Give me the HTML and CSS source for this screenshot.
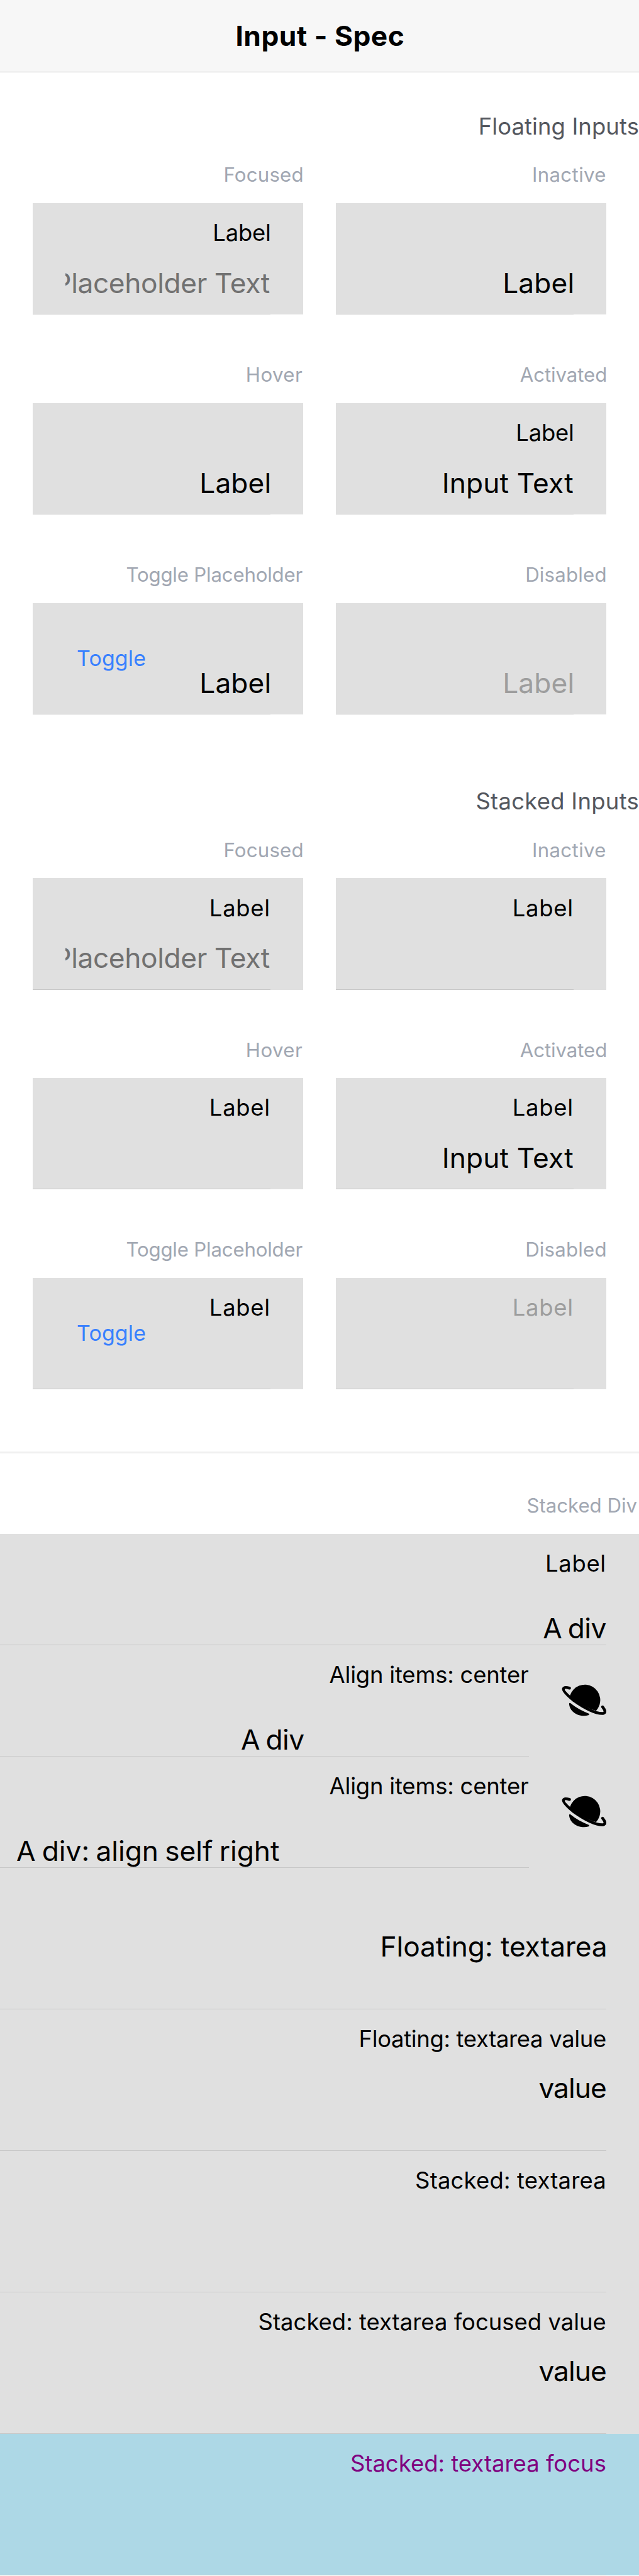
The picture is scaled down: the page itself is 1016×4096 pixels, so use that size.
FILE: index.html
```html
<!DOCTYPE html>
<html lang="en">
<head>
<meta charset="utf-8">
<title>Input - Spec</title>
<link rel="stylesheet" href="styles.css">
</head>
<body>
<svg class="defs" aria-hidden="true">
  <symbol id="planet" viewBox="78 27 252 252">
    <path d="M131 130A85 85 0 1 1 274 214C232 204 175 171 131 138Z"/>
    <path d="M133 172C164 197 200 217 234 230Q241 235 232 239C183 252 129 223 126 176Q127 169 133 172Z"/>
    <path d="M128 90C112 85 98 84 95 93C91 105 115 128 148 155C200 192 268 231 312 229C331 225 321 207 310 193" fill="none" stroke="#000" stroke-width="15.5" stroke-linecap="round"/>
  </symbol>
</svg>
<header class="header"><h1 class="title">Input - Spec</h1></header>
<main>
  <section class="section">
    <h2 class="section-title">Floating Inputs</h2>
    <div class="grid">
      <div><p class="caption focused">Focused</p><div class="card"><span class="label floated">Label</span><span class="input placeholder"><span>Placeholder Text</span></span></div></div>
      <div><p class="caption inactive">Inactive</p><div class="card resting"><span class="input big-label">Label</span></div></div>
      <div><p class="caption hover">Hover</p><div class="card resting"><span class="input big-label">Label</span></div></div>
      <div><p class="caption activated">Activated</p><div class="card"><span class="label floated">Label</span><span class="input">Input Text</span></div></div>
      <div><p class="caption toggle-caption">Toggle Placeholder</p><div class="card resting"><span class="toggle">Toggle</span><span class="input big-label">Label</span></div></div>
      <div><p class="caption">Disabled</p><div class="card resting disabled"><span class="input big-label">Label</span></div></div>
    </div>
  </section>
  <section class="section stacked">
    <h2 class="section-title wide">Stacked Inputs</h2>
    <div class="grid">
      <div><p class="caption focused">Focused</p><div class="card"><span class="label">Label</span><span class="input placeholder"><span>Placeholder Text</span></span></div></div>
      <div><p class="caption inactive">Inactive</p><div class="card"><span class="label">Label</span></div></div>
      <div><p class="caption hover">Hover</p><div class="card"><span class="label">Label</span></div></div>
      <div><p class="caption activated">Activated</p><div class="card"><span class="label">Label</span><span class="input">Input Text</span></div></div>
      <div><p class="caption toggle-caption">Toggle Placeholder</p><div class="card"><span class="toggle">Toggle</span><span class="label">Label</span></div></div>
      <div><p class="caption">Disabled</p><div class="card disabled"><span class="label">Label</span></div></div>
    </div>
  </section>
  <hr class="divider">
  <p class="caption list-caption">Stacked Div</p>
  <div class="list">
    <div class="item"><div class="inner"><span class="label">Label</span><span class="value short">A div</span></div></div>
    <div class="item"><div class="inner"><span class="label long align">Align items: center</span><span class="value short center">A div</span></div><svg class="icon"><use href="#planet"/></svg></div>
    <div class="item"><div class="inner"><span class="label long align">Align items: center</span><span class="value self-right">A div: align self right</span></div><svg class="icon"><use href="#planet"/></svg></div>
    <div class="item area resting"><div class="inner"><span class="value floating">Floating: textarea</span></div></div>
    <div class="item area"><div class="inner"><span class="label long floating-value">Floating: textarea value</span><span class="value text">value</span></div></div>
    <div class="item area"><div class="inner"><span class="label long textarea">Stacked: textarea</span></div></div>
    <div class="item area"><div class="inner"><span class="label long">Stacked: textarea focused value</span><span class="value text">value</span></div></div>
    <div class="item area focus"><div class="inner"><span class="label long">Stacked: textarea focus</span></div></div>
  </div>
</main>
</body>
</html>
```
FILE: styles.css
```css
html { font-size: 86.85px; }
* { box-sizing: border-box; }
body {
  margin: 0;
  background: #fff;
  color: #000;
  font: 400 .42rem/.6rem Inter, "Liberation Sans", sans-serif;
  text-align: right;
  overflow-x: hidden;
}
.defs { display: none; }

.header {
  height: 1.32rem;
  background: #f7f7f7;
  border-bottom: 1px solid #c6c6c6;
  text-align: center;
}
.title {
  margin: 0;
  font-size: .51rem;
  font-weight: 700;
  line-height: 1.32rem;
  letter-spacing: .0059rem;
  padding-left: .02rem;
}

.section { padding-top: .69rem; }
.section.stacked { padding-top: 1.29rem; }
.section-title {
  margin: 0 0 .39rem;
  font-size: .42rem;
  font-weight: 400;
  line-height: .6rem;
  letter-spacing: .001rem;
  color: #54575e;
}
.section-title.wide { letter-spacing: .003rem; }
.grid {
  display: grid;
  grid-template-columns: repeat(2, minmax(0, 1fr));
  gap: .9rem .6rem;
  padding: 0 .6rem;
}
.caption {
  margin: 0 -.01rem .31rem 0;
  padding-top: .01rem;
  font-size: .36rem;
  line-height: .4rem;
  letter-spacing: .002rem;
  color: #a1a7b2;
}
.caption.inactive { letter-spacing: .0039rem; margin-right: 0; }
.caption.hover { letter-spacing: .0046rem; margin-right: .01rem; }
.caption.activated { letter-spacing: -.0014rem; margin-right: -.015rem; }
.caption.toggle-caption { letter-spacing: -.0024rem; margin-right: .01rem; }

.card {
  position: relative;
  display: flex;
  flex-direction: column;
  height: 2.04rem;
  padding: .244rem .6rem 0;
  background: #e0e0e0;
}
.card::after {
  content: "";
  position: absolute;
  left: 0;
  right: .6rem;
  bottom: 0;
  height: 1px;
  background: #c8c8c8;
}
.label {
  line-height: .6rem;
  letter-spacing: .008rem;
  white-space: nowrap;
}
.label.floated { letter-spacing: -.0026rem; margin-right: -.01rem; }
.input {
  margin-top: .315rem;
  font-size: .51rem;
  line-height: .6rem;
  letter-spacing: .0016rem;
  white-space: nowrap;
}
.big-label { letter-spacing: .0014rem; margin-right: -.018rem; }
.resting .input { margin-top: .921rem; }
.placeholder {
  display: flex;
  justify-content: flex-end;
  overflow: hidden;
  padding-right: .01rem;
  color: #717171;
  letter-spacing: -.0045rem;
}
.disabled { color: #9d9d9d; }
.toggle {
  position: absolute;
  left: .805rem;
  top: 0;
  font-size: .39rem;
  line-height: 2.02rem;
  letter-spacing: .0022rem;
  color: #3880ff;
}

.divider {
  height: .03rem;
  margin: 1.14rem 0 .754rem;
  border: 0;
  background: #f0f0f0;
}
.list-caption {
  margin: 0 .035rem .306rem 0;
  letter-spacing: -.0006rem;
}

.item {
  display: flex;
  height: 2.04rem;
  padding-right: .6rem;
  background: #e0e0e0;
}
.item.area { height: 2.59rem; }
.inner {
  flex: 1;
  display: flex;
  flex-direction: column;
  padding-top: .244rem;
  border-bottom: 1px solid #c8c8c8;
}
.label.long { letter-spacing: 0; margin-right: 0; }
.label.align { letter-spacing: -.0023rem; }
.label.floating-value { letter-spacing: -.004rem; }
.label.textarea { letter-spacing: .002rem; }
.value {
  margin-top: .584rem;
  font-size: .51rem;
  line-height: .6rem;
  white-space: nowrap;
}
.value.short { letter-spacing: -.006rem; word-spacing: -.0285rem; }
.value.center { margin-right: 4.11rem; }
.value.self-right { word-spacing: -.0265rem; margin-right: 4.56rem; }
.area .value { margin-top: .301rem; }
.area.resting .value { margin-top: .896rem; }
.value.floating { letter-spacing: -.0012rem; margin-right: -.02rem; }
.value.text { letter-spacing: -.011rem; }
.icon {
  flex: none;
  width: .84rem;
  height: .84rem;
  margin: .575rem 0 0 .58rem;
  overflow: visible;
}
.focus { background: #add8e6; color: #800080; }
```
